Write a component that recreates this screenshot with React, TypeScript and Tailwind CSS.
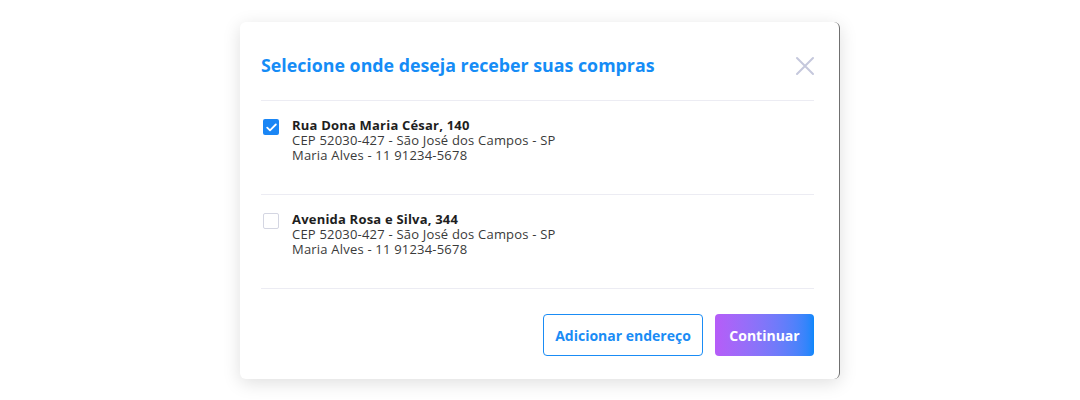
import React from "react";

const font = { fontFamily: '"Open Sans", "Liberation Sans", sans-serif' };

function Item({ checked, title }: { checked: boolean; title: string }) {
  return (
    <div className="flex h-[94px] items-start gap-[13px] border-b border-[#ececf3] pt-[17px] pl-[2px]">
      {checked ? (
        <div className="mt-[1px] flex h-[16px] w-[16px] items-center justify-center rounded-[2px] bg-[#1a86f5]">
          <svg width="11" height="9" viewBox="0 0 11 9" fill="none">
            <path d="M1.2 4.6L4 7.3L9.8 1.5" stroke="white" strokeWidth="1.8" strokeLinecap="round" strokeLinejoin="round" />
          </svg>
        </div>
      ) : (
        <div className="mt-[1px] h-[16px] w-[16px] rounded-[2px] border-[1.5px] border-[#d4d6e2] bg-white" />
      )}
      <div className="text-[13px] leading-[15px] tracking-[0.2px] text-[#3a3a3a]">
        <div className="font-bold text-[#1e1e1e]">{title}</div>
        <div>CEP 52030-427 - São José dos Campos - SP</div>
        <div>Maria Alves - 11 91234-5678</div>
      </div>
    </div>
  );
}

export default function App() {
  return (
    <div className="flex h-[400px] w-[1080px] justify-center bg-white pt-[22px]" style={font}>
      <div className="h-[357px] w-[600px] rounded-[6px] border-r border-[#707070] bg-white pl-[21px] pr-[25px] shadow-[0_4px_18px_rgba(0,0,0,0.13)]">
        <div className="flex h-[79px] items-center justify-between border-b border-[#ececf3] pt-[9px]">
          <h1 className="text-[17.8px] font-bold text-[#158cf6]">Selecione onde deseja receber suas compras</h1>
          <svg width="20" height="20" viewBox="0 0 20 20" className="mr-[-1px]">
            <path d="M2 2L18 18M18 2L2 18" stroke="#c5c8dc" strokeWidth="2" strokeLinecap="round" />
          </svg>
        </div>
        <Item checked title="Rua Dona Maria César, 140" />
        <Item checked={false} title="Avenida Rosa e Silva, 344" />
        <div className="flex justify-end gap-[12px] pt-[25px]">
          <button className="h-[42px] w-[160px] rounded-[4px] border-[1.5px] border-[#1a8cf5] bg-white text-[14px] font-bold text-[#1a8cf5]">
            Adicionar endereço
          </button>
          <button className="h-[42px] w-[99px] rounded-[4px] bg-gradient-to-r from-[#b65cf8] to-[#0b87fb] text-[14px] font-bold text-white">
            Continuar
          </button>
        </div>
      </div>
    </div>
  );
}
